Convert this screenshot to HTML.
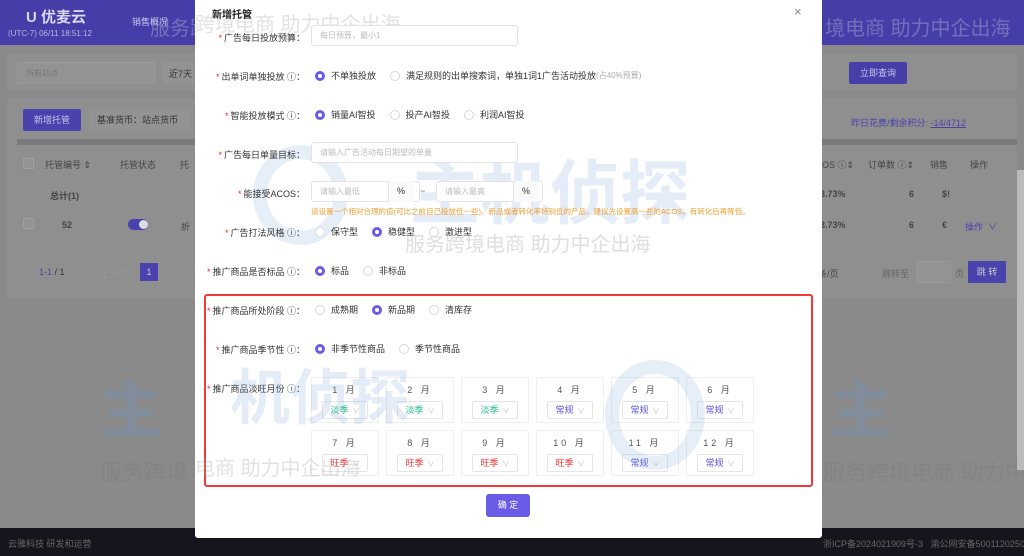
<!DOCTYPE html>
<html><head><meta charset="utf-8"><style>
*{margin:0;padding:0;box-sizing:border-box}
body{width:1024px;height:556px;overflow:hidden;position:relative;background:#8a8a8a;font-family:"Liberation Sans","Noto Sans CJK SC",sans-serif;font-size:9px;color:#333}
.a{position:absolute;white-space:nowrap}
.wm{position:absolute;color:rgba(120,120,120,.35);font-size:24px;white-space:nowrap}
.big{position:absolute;color:rgba(110,150,200,.35);font-size:62px;font-weight:bold;white-space:nowrap}
.lab{position:absolute;right:719px;white-space:nowrap;font-size:9px;color:#333}
.lab b{color:#f5222d;font-weight:normal;margin-right:2px}
.r{position:absolute;white-space:nowrap;font-size:9px;display:flex;align-items:center}
.rd{display:inline-block;width:10px;height:10px;border:1px solid #d9d9d9;border-radius:50%;margin-right:6px;background:#fff}
.rd.on{border:3px solid #6b5ce7}
.opt{margin-right:14px;display:flex;align-items:center}
.inp{position:absolute;border:1px solid #e3e3e3;border-radius:3px;background:#fff;color:#bbb;font-size:8px;padding:0 8px;display:flex;align-items:center}
.cell{position:absolute;width:68px;height:46px;border:1px solid #eee;border-radius:2px;text-align:center}
.cell .m{margin-top:5px;font-size:9px;color:#555;letter-spacing:3px}
.cell .s{margin:5px auto 0;width:46px;height:18px;border:1px solid #e5e5e5;border-radius:2px;font-size:9px;line-height:16px}
.s i{font-style:normal;color:#bbb;font-size:7px;margin-left:4px}
</style></head><body>
<div class="a" style="left:0;top:0;width:1024px;height:45px;background:#453ea8"></div>
<div class="a" style="left:26px;top:6px;font-size:15px;color:#d8d6f0;font-weight:bold">U 优麦云</div>
<div class="a" style="left:8px;top:29px;font-size:8px;color:#b8b4e0">(UTC-7) 06/11 18:51:12</div>
<div class="a" style="left:132px;top:15px;font-size:9px;color:#c8c5ea">销售概况</div>
<div class="a" style="left:150px;top:12px;font-size:20px;color:rgba(170,170,210,.45)">服务跨境电商</div>
<div class="a" style="left:825px;top:12px;font-size:20px;color:rgba(170,170,210,.45)">境电商 助力中企出海</div>
<div class="a" style="left:7px;top:53px;width:1010px;height:38px;background:#8f8f8f"></div>
<div class="a" style="left:17px;top:62px;width:138px;height:22px;border:1px solid #9a9a9a;background:#939393;color:#777;font-size:8px;padding:5px 8px">所有站点</div>
<div class="a" style="left:163px;top:62px;width:40px;height:22px;background:#939393;color:#333;font-size:9px;padding:5px 6px">近7天</div>
<div class="a" style="left:849px;top:62px;width:58px;height:22px;background:#463fa8;color:#c9c6ee;font-size:9px;text-align:center;line-height:22px;border-radius:2px">立即查询</div>
<div class="a" style="left:7px;top:99px;width:1010px;height:200px;background:#8f8f8f"></div>
<div class="a" style="left:23px;top:109px;width:58px;height:22px;background:#4a42ad;color:#c9c6ee;font-size:9px;text-align:center;line-height:22px;border-radius:2px">新增托管</div>
<div class="a" style="left:89px;top:109px;width:100px;height:22px;background:#939393;color:#333;font-size:9px;line-height:22px;padding-left:8px">基准货币：站点货币</div>
<div class="a" style="left:851px;top:116px;font-size:9px;color:#4a42ad">昨日花费/剩余积分: <u>-14/4712</u></div>
<div class="a" style="left:17px;top:139px;width:1000px;height:6px;background:#7a7a7a"></div>
<div class="a" style="left:45px;top:158px;color:#444">托管编号 ⇕</div>
<div class="a" style="left:120px;top:158px;color:#444">托管状态</div>
<div class="a" style="left:180px;top:158px;color:#444">托</div>
<div class="a" style="left:822px;top:158px;color:#444">OS ⓘ⇕</div>
<div class="a" style="left:868px;top:158px;color:#444">订单数 ⓘ⇕</div>
<div class="a" style="left:930px;top:158px;color:#444">销售</div>
<div class="a" style="left:970px;top:158px;color:#444">操作</div>
<div class="a" style="left:50px;top:189px;color:#444;font-weight:bold">总计(1)</div>
<div class="a" style="left:820px;top:189px;color:#444;font-weight:bold">3.73%</div>
<div class="a" style="left:909px;top:189px;color:#444;font-weight:bold">6</div>
<div class="a" style="left:942px;top:189px;color:#444;font-weight:bold">$!</div>
<div class="a" style="left:23px;top:218px;width:11px;height:11px;border:1px solid #a0a0a0;background:#939393"></div>
<div class="a" style="left:23px;top:158px;width:11px;height:11px;border:1px solid #a0a0a0;background:#939393"></div>
<div class="a" style="left:62px;top:220px;color:#444;font-weight:bold">52</div>
<div class="a" style="left:128px;top:219px;width:20px;height:11px;border-radius:6px;background:#4a42ad"></div>
<div class="a" style="left:139px;top:220px;width:9px;height:9px;border-radius:50%;background:#ddd"></div>
<div class="a" style="left:181px;top:220px;color:#444">折</div>
<div class="a" style="left:820px;top:220px;color:#444;font-weight:bold">3.73%</div>
<div class="a" style="left:909px;top:220px;color:#444;font-weight:bold">6</div>
<div class="a" style="left:942px;top:220px;color:#444;font-weight:bold">€</div>
<div class="a" style="left:965px;top:220px;color:#4a42ad">操作 &nbsp;∨</div>
<div class="a" style="left:39px;top:267px;color:#4a42ad">1-1 <span style="color:#333">/ 1</span></div>
<div class="a" style="left:100px;top:267px;color:#999">上一页</div>
<div class="a" style="left:140px;top:263px;width:18px;height:18px;background:#4a42ad;color:#ccc;text-align:center;line-height:18px">1</div>
<div class="a" style="left:818px;top:267px;color:#444">条/页</div>
<div class="a" style="left:882px;top:267px;color:#666">跳转至</div>
<div class="a" style="left:917px;top:261px;width:34px;height:22px;background:#939393;border:1px solid #999"></div>
<div class="a" style="left:955px;top:267px;color:#666">页</div>
<div class="a" style="left:968px;top:261px;width:38px;height:22px;background:#4a42ad;color:#ccc;text-align:center;line-height:22px">跳 转</div>
<div class="big" style="left:100px;top:360px;color:rgba(110,150,200,.3)">主</div>
<div class="wm" style="left:100px;top:455px;font-size:22px">服务跨境</div>
<div class="wm" style="left:823px;top:455px;font-size:22px">服务跨境电商 助力中企出海</div>
<div class="big" style="left:830px;top:360px;color:rgba(110,150,200,.3)">主</div>
<div class="a" style="left:0;top:528px;width:1024px;height:28px;background:#15151d"></div>
<div class="a" style="left:8px;top:537px;color:#666;font-size:9px">云雅科技 研发和运营</div>
<div class="a" style="left:823px;top:537px;color:#666;font-size:9px">浙ICP备2024021909号-3 &nbsp; 渝公网安备50011202504322号</div>
<div class="a" style="left:1017px;top:170px;width:7px;height:300px;background:#bbb"></div>
<div class="a" style="left:195px;top:0;width:627px;height:538px;background:#fff;border-radius:0 0 3px 3px"></div>
<div class="wm" style="left:195px;top:8px;font-size:20px;color:rgba(160,160,160,.3)">跨境电商 助力中企出海</div>
<div class="big" style="left:410px;top:138px;font-size:70px;color:rgba(130,170,220,.22)">主机侦探</div>
<div class="wm" style="left:405px;top:228px;font-size:20px;color:rgba(160,160,160,.35)">服务跨境电商 助力中企出海</div>
<div class="a" style="left:253px;top:145px;width:95px;height:100px;border:14px solid rgba(130,170,220,.2);border-radius:50%"></div>
<div class="a" style="left:212px;top:6px;font-size:10px;font-weight:bold;color:#222">新增托管</div>
<div class="a" style="left:794px;top:4px;font-size:13px;color:#888">×</div>

<div class="lab" style="top:31px"><b>*</b>广告每日投放预算：</div>
<div class="inp" style="left:311px;top:25px;width:207px;height:21px">每日预算，最小1</div>
<div class="lab" style="top:70px"><b>*</b>出单词单独投放 ⓘ：</div>
<div class="r" style="left:315px;top:69px"><span class="opt"><span class="rd on"></span>不单独投放</span><span class="opt"><span class="rd"></span>满足规则的出单搜索词，单独1词1广告活动投放<span style="color:#aaa;font-size:8px">(占40%预算)</span></span></div>
<div class="lab" style="top:109px"><b>*</b>智能投放模式 ⓘ：</div>
<div class="r" style="left:315px;top:108px"><span class="opt"><span class="rd on"></span>销量AI智投</span><span class="opt"><span class="rd"></span>投产AI智投</span><span class="opt"><span class="rd"></span>利润AI智投</span></div>
<div class="lab" style="top:148px"><b>*</b>广告每日单量目标：</div>
<div class="inp" style="left:311px;top:142px;width:207px;height:21px">请输入广告活动每日期望的单量</div>
<div class="lab" style="top:187px"><b>*</b>能接受ACOS：</div>
<div class="inp" style="left:311px;top:181px;width:109px;height:21px">请输入最低</div>
<div class="a" style="left:388px;top:181px;width:25px;height:21px;border-left:1px solid #e3e3e3;background:#fafafa;text-align:center;line-height:21px;color:#333">%</div>
<div class="a" style="left:420px;top:186px;color:#666">~</div>
<div class="inp" style="left:436px;top:181px;width:107px;height:21px">请输入最高</div>
<div class="a" style="left:513px;top:181px;width:25px;height:21px;border-left:1px solid #e3e3e3;background:#fafafa;text-align:center;line-height:21px;color:#333">%</div>
<div class="a" style="left:311px;top:206px;font-size:7.5px;color:#f0a030">请设置一个相对合理的值(可比之前自己投放低一些)。新品或者转化率特别低的产品，建议先设置高一些的ACOS，有转化后再降低。</div>
<div class="lab" style="top:226px"><b>*</b>广告打法风格 ⓘ：</div>
<div class="r" style="left:315px;top:225px"><span class="opt"><span class="rd"></span>保守型</span><span class="opt"><span class="rd on"></span>稳健型</span><span class="opt"><span class="rd"></span>激进型</span></div>
<div class="lab" style="top:265px"><b>*</b>推广商品是否标品 ⓘ：</div>
<div class="r" style="left:315px;top:264px"><span class="opt"><span class="rd on"></span>标品</span><span class="opt"><span class="rd"></span>非标品</span></div>

<div class="a" style="left:204px;top:294px;width:609px;height:193px;border:2px solid #f03a3a;border-radius:3px"></div>
<div class="lab" style="top:304px"><b>*</b>推广商品所处阶段 ⓘ：</div>
<div class="r" style="left:315px;top:303px"><span class="opt"><span class="rd"></span>成熟期</span><span class="opt"><span class="rd on"></span>新品期</span><span class="opt"><span class="rd"></span>清库存</span></div>
<div class="lab" style="top:343px"><b>*</b>推广商品季节性 ⓘ：</div>
<div class="r" style="left:315px;top:342px"><span class="opt"><span class="rd on"></span>非季节性商品</span><span class="opt"><span class="rd"></span>季节性商品</span></div>
<div class="lab" style="top:382px"><b>*</b>推广商品淡旺月份 ⓘ：</div>

<div class="cell" style="left:311px;top:377px"><div class="m">1 月</div><div class="s" style="color:#2bbf8a">淡季<i>∨</i></div></div>
<div class="cell" style="left:386px;top:377px"><div class="m">2 月</div><div class="s" style="color:#2bbf8a">淡季<i>∨</i></div></div>
<div class="cell" style="left:461px;top:377px"><div class="m">3 月</div><div class="s" style="color:#2bbf8a">淡季<i>∨</i></div></div>
<div class="cell" style="left:536px;top:377px"><div class="m">4 月</div><div class="s" style="color:#5a4fd8">常规<i>∨</i></div></div>
<div class="cell" style="left:611px;top:377px"><div class="m">5 月</div><div class="s" style="color:#5a4fd8">常规<i>∨</i></div></div>
<div class="cell" style="left:686px;top:377px"><div class="m">6 月</div><div class="s" style="color:#5a4fd8">常规<i>∨</i></div></div>
<div class="cell" style="left:311px;top:430px"><div class="m">7 月</div><div class="s" style="color:#f03a3a">旺季<i>∨</i></div></div>
<div class="cell" style="left:386px;top:430px"><div class="m">8 月</div><div class="s" style="color:#f03a3a">旺季<i>∨</i></div></div>
<div class="cell" style="left:461px;top:430px"><div class="m">9 月</div><div class="s" style="color:#f03a3a">旺季<i>∨</i></div></div>
<div class="cell" style="left:536px;top:430px"><div class="m">10 月</div><div class="s" style="color:#f03a3a">旺季<i>∨</i></div></div>
<div class="cell" style="left:611px;top:430px"><div class="m">11 月</div><div class="s" style="color:#5a4fd8">常规<i>∨</i></div></div>
<div class="cell" style="left:686px;top:430px"><div class="m">12 月</div><div class="s" style="color:#5a4fd8">常规<i>∨</i></div></div>

<div class="big" style="left:230px;top:350px;font-size:60px;color:rgba(130,170,220,.22)">机侦探</div>
<div class="wm" style="left:195px;top:452px;font-size:20px;color:rgba(160,160,160,.3)">电商 助力中企出海</div>
<div class="a" style="left:605px;top:360px;width:100px;height:110px;border:14px solid rgba(130,170,220,.2);border-radius:50%"></div>

<div class="a" style="left:486px;top:494px;width:44px;height:23px;background:#6b5ce7;color:#fff;border-radius:3px;text-align:center;line-height:23px;font-size:9px">确 定</div>
</body></html>
